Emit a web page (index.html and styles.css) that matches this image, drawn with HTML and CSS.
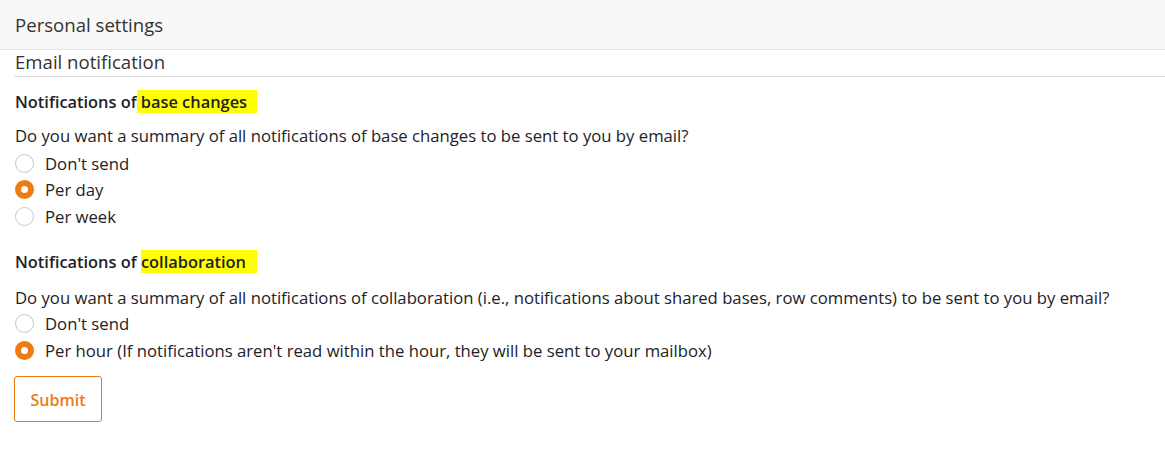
FILE: index.html
```html
<!DOCTYPE html>
<html>
<head>
<meta charset="utf-8">
<link rel="stylesheet" href="styles.css">
</head>
<body>
<div class="topbar"><h1 class="title">Personal settings</h1></div>
<div class="content">
  <h2 class="section-title">Email notification</h2>
  <div class="group">
    <h3 class="group-title">Notifications of<span class="hl">base changes</span></h3>
    <p class="question">Do you want a summary of all notifications of base changes to be sent to you by email?</p>
    <ul class="options">
      <li class="option"><span class="radio"></span>Don't send</li>
      <li class="option"><span class="radio checked"></span>Per day</li>
      <li class="option"><span class="radio"></span>Per week</li>
    </ul>
  </div>
  <div class="group group-second">
    <h3 class="group-title">Notifications of <span class="hl hl2">collaboration</span></h3>
    <p class="question">Do you want a summary of all notifications of collaboration (i.e., notifications about shared bases, row comments) to be sent to you by email?</p>
    <ul class="options">
      <li class="option"><span class="radio"></span>Don't send</li>
      <li class="option"><span class="radio checked"></span>Per hour (If notifications aren't read within the hour, they will be sent to your mailbox)</li>
    </ul>
  </div>
  <button class="submit">Submit</button>
</div>
</body>
</html>
```
FILE: styles.css
```css
html, body { margin: 0; padding: 0; background: #fff; }
body { font-family: "Open Sans", "Noto Sans", sans-serif; color: #1e2226; font-size: 16.7px; }
.topbar { height: 49px; background: #f8f8f8; border-bottom: 1px solid #e6e6e6; display: flex; align-items: center; padding-left: 15px; }
.title { margin: 0; font-size: 18.6px; font-weight: 400; color: #333; }
.content { padding-left: 14px; }
.section-title { margin: 0; font-size: 18.6px; font-weight: 400; color: #333; height: 26px; line-height: 24px; padding-left: 1px; border-bottom: 1px solid #dcdcdc; }
.group { padding-left: 1px; }
.group-title { margin: 14px 0 0; font-size: 16.4px; font-weight: 600; color: #1e2226; line-height: 22px; }
.group-second .group-title { margin-top: 21px; }
.hl { background: #ffff00; padding: 0 10px 0 4px; font-weight: 600; }
.hl2 { padding-left: 0; padding-right: 11px; }
.question { margin: 12px 0 0; line-height: 22px; }
.group-second .question { margin-top: 14px; }
.options { list-style: none; margin: 3px 0 0; padding: 0; }
.group-second .options { margin-top: 2px; }
.option { display: flex; align-items: center; height: 26.5px; }
.radio { width: 19px; height: 19px; border: 1px solid #c8c8c8; border-radius: 50%; box-sizing: border-box; margin-right: 11px; flex: none; }
.radio.checked { border: 6px solid #ee7a14; background: #fff; }
.submit { margin-top: 12px; width: 88px; height: 46px; border: 1px solid #ee7a14; border-radius: 3px; background: #fff; color: #ee7a14; font-family: "Open Sans", sans-serif; font-weight: 600; font-size: 16px; padding: 2px 0 0; }
```
